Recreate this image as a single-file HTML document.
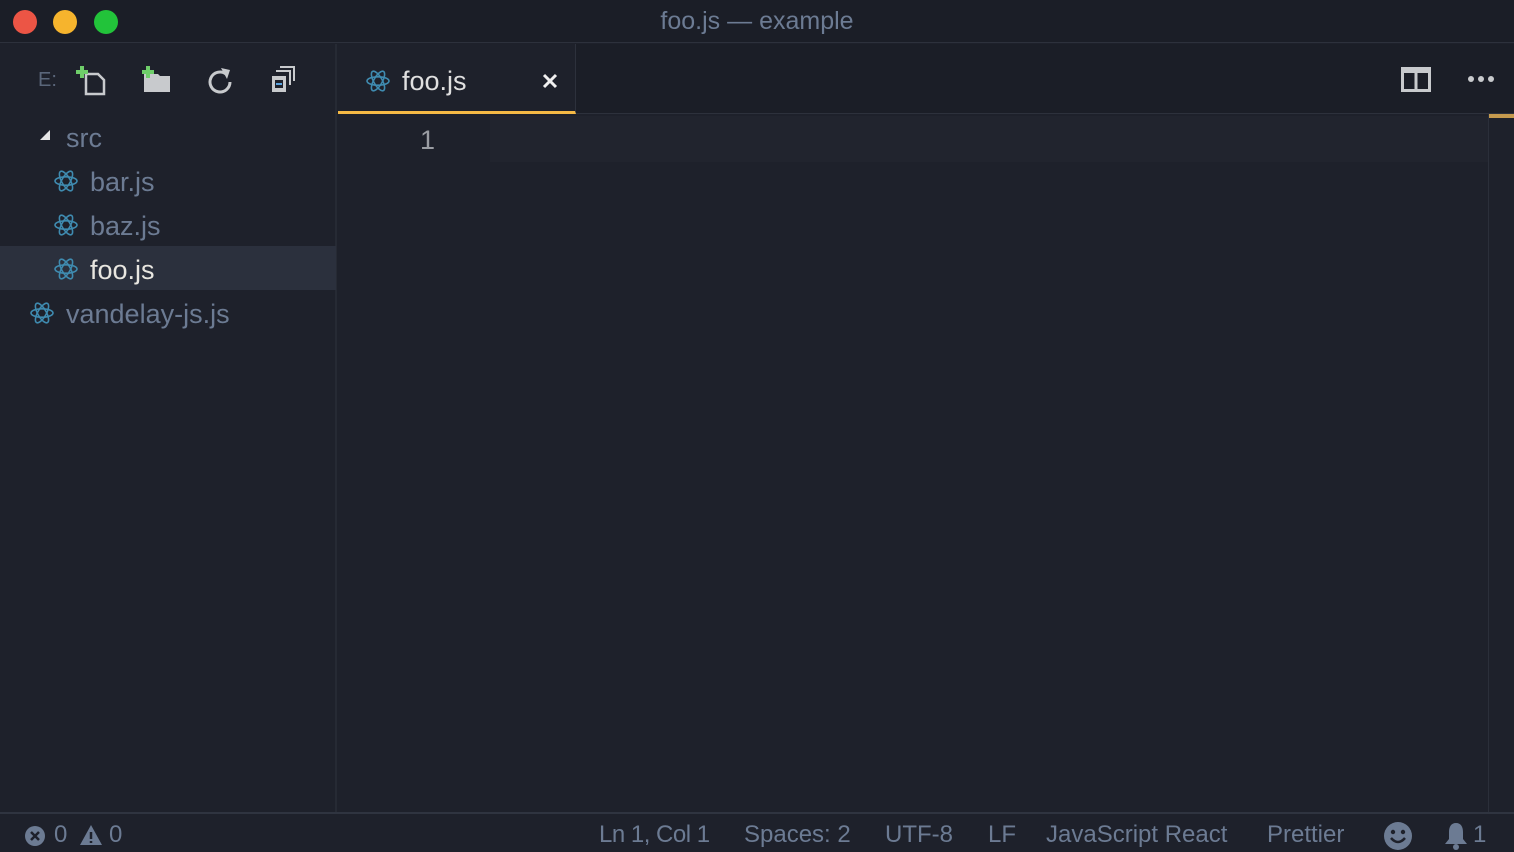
<!DOCTYPE html><html><head><style>
body{margin:0;width:1514px;height:852px;background:#1e212b;font-family:"Liberation Sans",sans-serif;overflow:hidden;position:relative}
div{position:absolute;box-sizing:border-box}
.t{color:#6c7b93;font-size:27px;white-space:nowrap}
.s{color:#6c7b93;font-size:24px;white-space:nowrap;top:821px}
</style></head><body>
<svg width="0" height="0" style="position:absolute"><defs><g id="r" fill="none" stroke="#3f8bb0" stroke-width="1.6"><ellipse cx="12" cy="12" rx="11" ry="4.2"/><ellipse cx="12" cy="12" rx="11" ry="4.2" transform="rotate(60 12 12)"/><ellipse cx="12" cy="12" rx="11" ry="4.2" transform="rotate(120 12 12)"/></g></defs></svg>
<div style="left:0;top:0;width:1514px;height:43px;background:#1b1e27;border-bottom:1px solid #2d313c"></div>
<div style="left:13px;top:10px;width:24px;height:24px;border-radius:50%;background:#ec5545"></div>
<div style="left:53px;top:10px;width:24px;height:24px;border-radius:50%;background:#f6b42d"></div>
<div style="left:94px;top:10px;width:24px;height:24px;border-radius:50%;background:#22c33a"></div>
<div class="t" style="left:0;width:1514px;top:7px;text-align:center;font-size:25px;color:#6c7b93">foo.js — example</div>
<div style="left:0;top:44px;width:337px;height:768px;background:#1e212b;border-right:2px solid #262a34"></div>
<div class="t" style="left:38px;top:69px;font-size:20px;color:#5a667a">E:</div>
<svg style="position:absolute;left:76px;top:64px" width="34" height="32"><path d="M10 10h12l6 6v14H10z" fill="none" stroke="#c8cacd" stroke-width="2.5"/><path d="M6 2v12M0 8h12" stroke="#6fce6a" stroke-width="4"/></svg>
<svg style="position:absolute;left:140px;top:64px" width="34" height="32"><path d="M4 10h14l2 2h10v16H4z" fill="#c8cacd"/><path d="M8 2v12M2 8h12" stroke="#6fce6a" stroke-width="4"/></svg>
<svg style="position:absolute;left:204px;top:64px" width="32" height="32"><path d="M22 10A10 10 0 1 0 26 18" fill="none" stroke="#c8cacd" stroke-width="3"/><path d="M17 4l9 2-3 9z" fill="#c8cacd"/></svg>
<svg style="position:absolute;left:268px;top:64px" width="34" height="32"><path d="M12 3h14v14M8 7h14v14" fill="none" stroke="#c8cacd" stroke-width="2"/><rect x="4" y="12" width="14" height="16" fill="#c8cacd"/><rect x="7" y="16" width="8" height="8" fill="#1e212b"/><rect x="8" y="19" width="6" height="2" fill="#5aa3e0"/></svg>
<svg style="position:absolute;left:38px;top:128px" width="14" height="14"><path d="M12 2v10H2z" fill="#e6e6e6"/></svg>
<div class="t" style="left:66px;top:123px">src</div>
<div style="left:0;top:246px;width:336px;height:44px;background:#2b303d"></div>
<svg style="position:absolute;left:54px;top:169px" width="24" height="24"><use href="#r"/></svg><div class="t" style="left:90px;top:167px">bar.js</div>
<svg style="position:absolute;left:54px;top:213px" width="24" height="24"><use href="#r"/></svg><div class="t" style="left:90px;top:211px">baz.js</div>
<svg style="position:absolute;left:54px;top:257px" width="24" height="24"><use href="#r"/></svg><div class="t" style="left:90px;top:255px;color:#e8e6e0">foo.js</div>
<svg style="position:absolute;left:30px;top:301px" width="24" height="24"><use href="#r"/></svg><div class="t" style="left:66px;top:299px">vandelay-js.js</div>
<div style="left:338px;top:44px;width:1176px;height:70px;background:#1b1e27;border-bottom:1px solid #2d313c"></div>
<div style="left:338px;top:44px;width:238px;height:70px;background:#1e212b;border-right:1px solid #2d313c;border-bottom:3px solid #f5b945"></div>
<svg style="position:absolute;left:366px;top:69px" width="24" height="24"><use href="#r"/></svg>
<div class="t" style="left:402px;top:66px;color:#e0e0e0">foo.js</div>
<svg style="position:absolute;left:541px;top:72px" width="18" height="18"><path d="M3 3l12 12M15 3L3 15" stroke="#f0f0f0" stroke-width="3"/></svg>
<svg style="position:absolute;left:1401px;top:67px" width="30" height="26"><rect x="1.5" y="1.5" width="27" height="22" fill="none" stroke="#c8cacd" stroke-width="3"/><rect x="1" y="1" width="28" height="5" fill="#c8cacd"/><path d="M15 1v24" stroke="#c8cacd" stroke-width="3"/></svg>
<div style="left:1468px;top:76px;width:6px;height:6px;border-radius:50%;background:#c8cacd"></div>
<div style="left:1478px;top:76px;width:6px;height:6px;border-radius:50%;background:#c8cacd"></div>
<div style="left:1488px;top:76px;width:6px;height:6px;border-radius:50%;background:#c8cacd"></div>
<div style="left:490px;top:116px;width:998px;height:46px;background:#21242e"></div>
<div class="t" style="left:420px;top:125px;color:#9a9da3">1</div>
<div style="left:1488px;top:114px;width:26px;height:698px;border-left:1px solid #2b2f3a"></div>
<div style="left:1489px;top:114px;width:25px;height:4px;background:#c59a4e"></div>
<div style="left:0;top:812px;width:1514px;height:40px;background:#1e212b;border-top:2px solid #2f3440"></div>
<svg style="position:absolute;left:24px;top:825px" width="22" height="22"><circle cx="11" cy="11" r="10" fill="#6c7b93"/><path d="M7 7l8 8M15 7l-8 8" stroke="#1e212b" stroke-width="2.5"/></svg>
<div class="s" style="left:54px">0</div>
<svg style="position:absolute;left:79px;top:824px" width="24" height="22"><path d="M12 1L23 21H1z" fill="#6c7b93"/><path d="M12 8v7M12 17v2" stroke="#1e212b" stroke-width="2.5"/></svg>
<div class="s" style="left:109px">0</div>
<div class="s" style="left:599px;letter-spacing:-0.5px">Ln 1, Col 1</div>
<div class="s" style="left:744px">Spaces: 2</div>
<div class="s" style="left:885px">UTF-8</div>
<div class="s" style="left:988px">LF</div>
<div class="s" style="left:1046px">JavaScript React</div>
<div class="s" style="left:1267px">Prettier</div>
<svg style="position:absolute;left:1383px;top:821px" width="30" height="30"><circle cx="15" cy="15" r="14" fill="#6c7b93"/><circle cx="10" cy="11" r="2.2" fill="#1e212b"/><circle cx="20" cy="11" r="2.2" fill="#1e212b"/><path d="M8 17q7 8 14 0" fill="none" stroke="#1e212b" stroke-width="2.5"/></svg>
<svg style="position:absolute;left:1443px;top:821px" width="26" height="30"><path d="M13 2c-5 0-7 4-7 9v7l-4 5h22l-4-5v-7c0-5-2-9-7-9z" fill="#6c7b93"/><circle cx="13" cy="26" r="3" fill="#6c7b93"/></svg>
<div class="s" style="left:1473px">1</div>
</body></html>
